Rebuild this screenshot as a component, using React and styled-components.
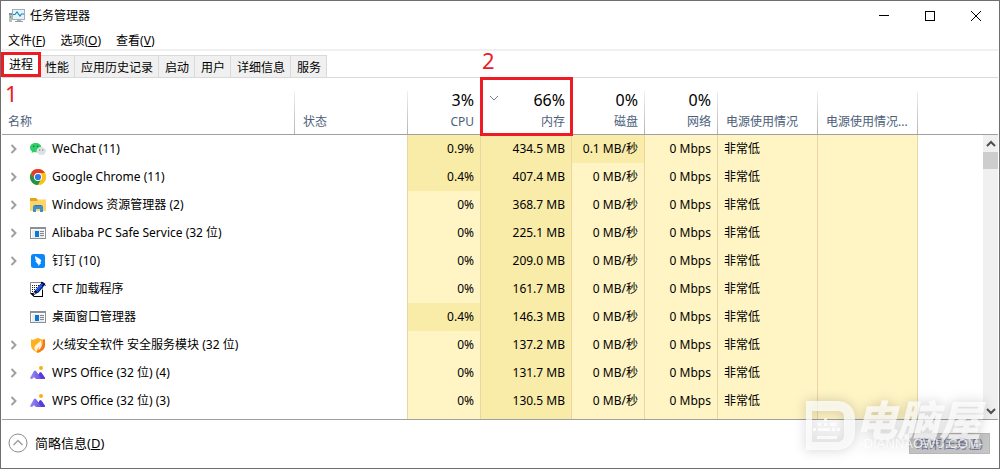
import React, {useState} from "react";

import styled, {createGlobalStyle, css} from 'styled-components';

const GlobalStyle = createGlobalStyle`
  * {
    box-sizing: border-box;
  }

  body {
    margin: 0;
    background: #fff;
    color: #000;
    font-family: "Noto Sans", "Noto Sans CJK SC", sans-serif;
    font-size: 12px;
    line-height: 16px;
  }

  button {
    margin: 0;
    padding: 0;
    border: 0;
    background: none;
    color: inherit;
    font: inherit;
  }

  svg {
    display: block;
  }
`;

const Window = styled.div`
  position: relative;
  display: flex;
  flex-direction: column;
  min-height: 100vh;
  padding: 0 1px;
  border: 1px solid #6f6d70;
  overflow: hidden;
`;

const TitleBar = styled.header`
  display: flex;
  align-items: center;
  height: 30px;
  padding-left: 7px;
`;

const Title = styled.h1`
  flex: 1;
  margin: 0 0 0 5px;
  font-size: 12px;
  font-weight: 400;
`;

const WindowControls = styled.div`
  display: flex;
  margin-right: -1px;
`;

const ControlButton = styled.button`
  display: flex;
  align-items: center;
  justify-content: center;
  width: 46px;
  height: 30px;
`;

const MenuBar = styled.nav`
  display: flex;
  height: 20px;
  border-bottom: 2px solid #f0f0f0;
`;

const MenuItem = styled.button`
  height: 18px;
  padding: 2px 7px 0 6px;

  & + & {
    padding-left: 8px;
  }
`;

const TabStrip = styled.div`
  display: flex;
  align-items: flex-end;
  height: 27px;
  border-bottom: 1px solid #d9d9d9;
`;

const Tab = styled.button`
  position: relative;
  height: 22px;
  padding: 2px 5px 0 6px;
  border: solid #d9d9d9;
  border-width: 1px 1px 0 0;
  background: #f0f0f0;

  ${({$active}) => $active && css`
    height: 26px;
    padding: 2px 6px 0 7px;
    border: 0;
    background: #fff;
  `}
`;

// red marker frame drawn over a tab or a column header
const Marker = styled.span`
  position: absolute;
  inset: ${({$inset}) => $inset};
  border: 3px solid #ed1c24;
  pointer-events: none;
  z-index: 1;
`;

const MarkerNumber = styled.span`
  position: absolute;
  left: ${({$left}) => $left};
  top: ${({$top}) => $top};
  color: #ed1c24;
  font-size: 22px;
  line-height: 24px;
`;

const ListArea = styled.main`
  display: grid;
  flex: 1;
`;

const ProcessTable = styled.table`
  grid-area: 1 / 1;
  width: 100%;
  height: 100%;
  table-layout: fixed;
  border-collapse: separate;
  border-spacing: 0;
`;

const Column = styled.col`
  width: ${({$width}) => $width};
`;

const HeadCell = styled.th`
  position: relative;
  height: 57px;
  padding: 0 7px 4px 8px;
  border-bottom: 1px solid #a0a0a0;
  background: ${({$plain}) => $plain ? 'none' : 'linear-gradient(#f0f0f0, #b4b4b4) right bottom / 1px 43px no-repeat'};
  color: #4c607a;
  font-weight: 400;
  text-align: ${({$align}) => $align || 'left'};
  vertical-align: bottom;
  white-space: nowrap;

  &:first-child {
    padding-left: 6px;
  }
`;

const Usage = styled.div`
  margin-bottom: 4px;
  color: #000;
  font-size: 16px;
  line-height: 20px;
`;

const SortArrow = styled.span`
  position: absolute;
  left: 8px;
  top: 15px;
`;

const Cell = styled.td`
  height: 28px;
  padding: 0 6px;
  border-right: ${({$heat, $edge}) => $heat || $edge ? '1px solid #ebd5a1' : 0};
  background: ${({$heat}) => ({low: '#fff4c4', high: '#f9eca8'}[$heat] || 'none')};
  text-align: ${({$align}) => $align || 'left'};
  white-space: nowrap;
`;

const FillerCell = styled(Cell)`
  height: auto;
  padding: 0;
`;

const ProcessName = styled.div`
  display: flex;
  align-items: center;
`;

const ExpandButton = styled.button`
  width: 22px;
  height: 16px;
  padding: 3px 0;
`;

const IconSlot = styled.span`
  width: 16px;
  height: 16px;
  margin-right: 6px;
`;

const ScrollBar = styled.div`
  grid-area: 1 / 1;
  justify-self: end;
  display: flex;
  flex-direction: column;
  align-items: center;
  width: 15px;
  margin-top: 57px;
  background: #f0f0f0;
`;

const ScrollButton = styled.button`
  display: flex;
  align-items: center;
  justify-content: center;
  width: 15px;
  height: 17px;
`;

const ScrollTrack = styled.div`
  flex: 1;
  width: 15px;
`;

const ScrollThumb = styled.div`
  height: 17px;
  background: #cdcdcd;
`;

const Footer = styled.footer`
  display: flex;
  align-items: center;
  justify-content: space-between;
  height: 49px;
  padding: 0 8px 2px 6px;
  border-top: 1px solid #a0a0a0;
  font-size: 13px;
`;

const DetailsButton = styled.button`
  display: flex;
  align-items: center;
  gap: 7px;
`;

const EndTaskButton = styled.button`
  height: 21px;
  padding: 0 6px;
  border: 1px solid #b9b9b9;
  background: #c6c6c6;
  color: #747b9c;
`;

const Watermark = styled.div`
  position: absolute;
  right: 16px;
  bottom: 16px;
  display: flex;
  align-items: center;
  gap: 4px;
  color: rgba(255, 255, 255, 0.72);
  filter: drop-shadow(0 0 6px rgba(0, 0, 0, 0.25));
  pointer-events: none;
`;

const WatermarkText = styled.div`
  text-align: center;
`;

const WatermarkName = styled.div`
  margin-left: -6px;
  font-family: "Noto Sans CJK SC", sans-serif;
  font-size: 42px;
  font-style: italic;
  font-weight: 900;
  line-height: 36px;
`;

const WatermarkSite = styled.div`
  font-family: "Liberation Sans", sans-serif;
  font-size: 13px;
  line-height: 16px;
`;

const Chevron = ({dir = 'right', color = '#a0a0a0', width = 2}) => {
  const paths = {
    right: 'M3.5 1 L7.5 5 L3.5 9',
    down: 'M1 3 L5 7 L9 3',
    up: 'M1 7 L5 3 L9 7',
  };
  return (
      <svg width="10" height="10" viewBox="0 0 10 10" fill="none">
        <path d={paths[dir]} stroke={color} strokeWidth={width}/>
      </svg>
  )
};

const TaskManagerIcon = () => (
    <svg width="16" height="16" viewBox="0 0 16 16">
      <rect x="0" y="5" width="3" height="9" fill="#b9bcbd"/>
      <rect x="0" y="5" width="3" height="2" fill="#8b8f92"/>
      <rect x="1" y="8" width="1" height="2" fill="#36c148"/>
      <rect x="3" y="1" width="13" height="11" fill="#a9adb0"/>
      <rect x="4" y="2" width="11" height="9" fill="#e3f5fc"/>
      <path d="M4 6.500 L6 6.500 L8 4 L11 8 L12.5 6 L15 6" fill="none" stroke="#1784b5" strokeWidth="1.1"/>
      <rect x="8" y="12" width="4" height="1" fill="#b0b3b5"/>
      <rect x="6" y="13" width="8" height="1" fill="#9a9da0"/>
    </svg>
);

const WeChatIcon = () => (
    <svg width="16" height="16" viewBox="0 0 16 16">
      <path d="M5.7 2 C2.5 2 0 4 0 6.7 C0 8.2 .8 9.5 2 10.3 L1.7 12 L3.6 11 C4.3 11.2 5 11.3 5.7 11.3 C8.9 11.3 11.4 9.3 11.4 6.7 C11.4 4 8.9 2 5.7 2Z" fill="#2ecf68"/>
      <circle cx="3.8" cy="5.3" r=".8" fill="#16703a"/>
      <circle cx="7.7" cy="5.3" r=".8" fill="#16703a"/>
      <path d="M11.2 6 C8.5 6 6.5 7.8 6.5 10 C6.5 12.2 8.5 14 11.2 14 C11.8 14 12.3 13.9 12.9 13.7 L14.5 14.6 L14.2 13.1 C15.3 12.4 16 11.3 16 10 C16 7.8 13.9 6 11.2 6Z" fill="#dfe2e3"/>
      <circle cx="9.7" cy="9" r=".7" fill="#7b7f82"/>
      <circle cx="12.8" cy="9" r=".7" fill="#7b7f82"/>
    </svg>
);

const ChromeIcon = () => (
    <svg width="16" height="16" viewBox="0 0 16 16">
      <circle cx="8" cy="8" r="8" fill="#fbc116"/>
      <path d="M8 4 L14.93 4 A8 8 0 0 0 1.07 4 L4.54 10Z" fill="#e33b2e"/>
      <path d="M1.07 4 A8 8 0 0 0 8 16 L11.46 10 L8 10 L4.54 10 Z" fill="#229342"/>
      <path d="M8 16 A8 8 0 0 0 14.93 4 L8 4 L11.46 10Z" fill="#fbc116"/>
      <circle cx="8" cy="8" r="4" fill="#fff"/>
      <circle cx="8" cy="8" r="3.1" fill="#2f78e8"/>
    </svg>
);

const ExplorerIcon = () => (
    <svg width="16" height="16" viewBox="0 0 16 16">
      <path d="M0 1 H6 L8 3 H8 V6 H0Z" fill="#e0a31a"/>
      <path d="M0 4 H7 L8 2.5 H16 V14 H0Z" fill="#fdd465"/>
      <path d="M3 15 V10 Q3 8 5 8 H11 Q13 8 13 10 V15 H10 V12 H6 V15Z" fill="#3c8ecf"/>
      <path d="M5 8 H11 V9 H5Z" fill="#2674b4"/>
    </svg>
);

const ServiceIcon = () => (
    <svg width="16" height="16" viewBox="0 0 16 16">
      <rect x=".5" y="2.5" width="15" height="11" fill="#fff" stroke="#8b9095"/>
      <rect x="0" y="2" width="16" height="2" fill="#8b9095"/>
      <rect x="2" y="5" width="12" height="8" fill="#ececec"/>
      <rect x="5" y="6" width="4" height="6" fill="#0a77d5"/>
      <path d="M10 6.5 H14 M10 8.5 H14 M10 10.5 H14" stroke="#858b90"/>
    </svg>
);

const DingTalkIcon = () => (
    <svg width="16" height="16" viewBox="0 0 16 16">
      <rect x="1" y="1" width="14" height="14" rx="2.5" fill="#0c86fb"/>
      <path d="M5 3 C7 4.6 10 5.5 11 7 C11.5 8 10.8 9 10.2 10 H11.3 L8 13 L8.3 11 H7.2 L7.5 9.9 C5.9 9.8 5.6 8.7 5.4 7.8 L6.5 7.9 C5.4 6.8 5 5 5 3Z" fill="#fff"/>
    </svg>
);

const CtfIcon = () => (
    <svg width="16" height="16" viewBox="0 0 16 16">
      <path d="M.5 1.5 H12.5 V15.5 H3.5 L.5 12.5Z" fill="#fff" stroke="#8a8a8a"/>
      <path d="M0 12 L4 16 H13 V9 L12 9 V15 H4 V12Z" fill="#000"/>
      <path d="M2 4.5 H10 M2 6.5 H9 M2 8.5 H7 M2 10.5 H6" stroke="#222" strokeDasharray="1 1"/>
      <path d="M3 14 L5 9.5 L12.5 .8 L15.5 3 L8.5 11.5Z" fill="#000080"/>
      <path d="M6 10 L13 2.2" stroke="#1f6bff" strokeWidth="1.2"/>
      <path d="M7 11 L12 5" stroke="#00c5df" strokeWidth=".7"/>
      <path d="M11 1 L15.5 4.5" stroke="#000"/>
      <path d="M3 14 L4.5 10.7 L6 12.5Z" fill="#fff" stroke="#000" strokeWidth=".6"/>
    </svg>
);

const HuorongIcon = () => (
    <svg width="16" height="16" viewBox="0 0 16 16">
      <path d="M1 2.5 C4 3 6 2 8 .8 C10 2 12 3 15 2.5 V8 C15 12 11.5 14.5 8 15.7 C4.5 14.5 1 12 1 8Z" fill="#ffb01f"/>
      <path d="M13 2.6 L15 2.5 V8 C15 12 11.5 14.5 8 15.7 L6.5 15 C11 11.5 13.5 8 13 2.6Z" fill="#f7791b"/>
      <path d="M10.5 3 C10 6 5 7 4.5 10.5 C4.3 12.5 5.5 14 6.8 14.5 C6.5 12.5 8 11.5 8.5 10 C9 11 8.8 12 8.7 13 C11.5 11 12.8 7.5 10.5 3Z" fill="#fff3df"/>
    </svg>
);

const WpsIcon = () => (
    <svg width="16" height="16" viewBox="0 0 16 16">
      <defs>
        <linearGradient id="wpsHill" x1="0" x2="1">
          <stop offset="0" stopColor="#9b8cf8"/>
          <stop offset="1" stopColor="#5539d8"/>
        </linearGradient>
      </defs>
      <path d="M0 13 L4 6 Q5 4.8 6 6 L8.5 9.5 L9.5 7.8 Q10.5 6.6 11.5 7.8 L15 13 Q15 14 14 14 H6 L4 12.3 L2 14 Q0 14 0 13Z" fill="url(#wpsHill)"/>
      <path d="M8.5 9.5 L9.5 7.8 Q10.5 6.6 11.5 7.8 L15 13 Q15 14 14 14 H11.5Z" fill="#5a3cdc"/>
      <circle cx="11" cy="3" r="2" fill="#fbae17"/>
    </svg>
);

const columns = [
  {label: '名称', width: '293px'},
  {label: '状态', width: '113px'},
  {label: 'CPU', width: '73px', usage: '3%', align: 'right'},
  {label: '内存', width: '91px', usage: '66%', align: 'right', sorted: true},
  {label: '磁盘', width: '73px', usage: '0%', align: 'right'},
  {label: '网络', width: '73px', usage: '0%', align: 'right'},
  {label: '电源使用情况', width: '100px'},
  {label: '电源使用情况...', width: '100px'},
];

const processes = [
  {name: 'WeChat (11)', Icon: WeChatIcon, group: true, cpu: '0.9%', memory: '434.5 MB', disk: '0.1 MB/秒'},
  {name: 'Google Chrome (11)', Icon: ChromeIcon, group: true, cpu: '0.4%', memory: '407.4 MB', disk: '0 MB/秒'},
  {name: 'Windows 资源管理器 (2)', Icon: ExplorerIcon, group: true, cpu: '0%', memory: '368.7 MB', disk: '0 MB/秒'},
  {name: 'Alibaba PC Safe Service (32 位)', Icon: ServiceIcon, group: true, cpu: '0%', memory: '225.1 MB', disk: '0 MB/秒'},
  {name: '钉钉 (10)', Icon: DingTalkIcon, group: true, cpu: '0%', memory: '209.0 MB', disk: '0 MB/秒'},
  {name: 'CTF 加载程序', Icon: CtfIcon, cpu: '0%', memory: '161.7 MB', disk: '0 MB/秒'},
  {name: '桌面窗口管理器', Icon: ServiceIcon, cpu: '0.4%', memory: '146.3 MB', disk: '0 MB/秒'},
  {name: '火绒安全软件 安全服务模块 (32 位)', Icon: HuorongIcon, group: true, cpu: '0%', memory: '137.2 MB', disk: '0 MB/秒'},
  {name: 'WPS Office (32 位) (4)', Icon: WpsIcon, group: true, cpu: '0%', memory: '131.7 MB', disk: '0 MB/秒'},
  {name: 'WPS Office (32 位) (3)', Icon: WpsIcon, group: true, cpu: '0%', memory: '130.5 MB', disk: '0 MB/秒'},
];

const menus = [['文件', 'F'], ['选项', 'O'], ['查看', 'V']];
const tabs = ['进程', '性能', '应用历史记录', '启动', '用户', '详细信息', '服务'];

const heat = value => parseFloat(value) > 0 ? 'high' : 'low';

const ProcessRow = ({name, Icon, group, cpu, memory, disk}) => (
    <tr>
      <Cell>
        <ProcessName>
          {group ?
              <ExpandButton aria-label={`展开 ${name}`}><Chevron/></ExpandButton> :
              <ExpandButton as="span"/>
          }
          <IconSlot><Icon/></IconSlot>
          {name}
        </ProcessName>
      </Cell>
      <Cell $edge/>
      <Cell $heat={heat(cpu)} $align="right">{cpu}</Cell>
      <Cell $heat="high" $align="right">{memory}</Cell>
      <Cell $heat={heat(disk)} $align="right">{disk}</Cell>
      <Cell $heat="low" $align="right">0 Mbps</Cell>
      <Cell $heat="low">非常低</Cell>
      <Cell $heat="low"/>
      <Cell/>
    </tr>
);

const App = () => {
  const [active, setActive] = useState('进程');

  return (
      <Window>
        <GlobalStyle/>
        <TitleBar>
          <TaskManagerIcon/>
          <Title>任务管理器</Title>
          <WindowControls>
            <ControlButton aria-label="最小化">
              <svg width="10" height="10" viewBox="0 0 10 10"><path d="M0 4.5 H10" stroke="#000"/></svg>
            </ControlButton>
            <ControlButton aria-label="最大化">
              <svg width="10" height="10" viewBox="0 0 10 10"><rect x=".5" y=".5" width="9" height="9" fill="none" stroke="#000"/></svg>
            </ControlButton>
            <ControlButton aria-label="关闭">
              <svg width="10" height="10" viewBox="0 0 10 10"><path d="M0 0 L10 10 M10 0 L0 10" stroke="#000"/></svg>
            </ControlButton>
          </WindowControls>
        </TitleBar>

        <MenuBar>
          {menus.map(([label, key]) => (
              <MenuItem key={key}>{label}(<u>{key}</u>)</MenuItem>
          ))}
        </MenuBar>

        <TabStrip role="tablist">
          {tabs.map(tab => (
              <Tab key={tab} role="tab" aria-selected={tab === active} $active={tab === active}
                   onClick={() => setActive(tab)}>
                {tab}
                {tab === '进程' && <Marker $inset="1px -2px 0 -1px"/>}
              </Tab>
          ))}
        </TabStrip>

        <ListArea>
          <ProcessTable>
            <colgroup>
              {columns.map(({label, width}) => <Column key={label} $width={width}/>)}
              <Column $width="auto"/>
            </colgroup>
            <thead>
              <tr>
                {columns.map(({label, usage, align, sorted}, i) => (
                    <HeadCell key={label} scope="col" $align={align}>
                      {sorted && <SortArrow><Chevron dir="down" color="#6d7f92" width={1}/></SortArrow>}
                      {usage && <Usage>{usage}</Usage>}
                      {label}
                      {i === 0 && <MarkerNumber $left="3px" $top="3px">1</MarkerNumber>}
                      {sorted && <MarkerNumber $left="1px" $top="-30px">2</MarkerNumber>}
                      {sorted && <Marker $inset="-1px -1px -2px"/>}
                    </HeadCell>
                ))}
                <HeadCell as="td" $plain/>
              </tr>
            </thead>
            <tbody>
              {processes.map(process => <ProcessRow key={process.name} {...process}/>)}
              <tr>
                <FillerCell/>
                <FillerCell $edge/>
                <FillerCell $heat="low"/>
                <FillerCell $heat="high"/>
                <FillerCell $heat="low"/>
                <FillerCell $heat="low"/>
                <FillerCell $heat="low"/>
                <FillerCell $heat="low"/>
                <FillerCell/>
              </tr>
            </tbody>
          </ProcessTable>
          <ScrollBar>
            <ScrollButton aria-label="向上滚动"><Chevron dir="up" color="#505050"/></ScrollButton>
            <ScrollTrack><ScrollThumb/></ScrollTrack>
            <ScrollButton aria-label="向下滚动"><Chevron dir="down" color="#505050"/></ScrollButton>
          </ScrollBar>
        </ListArea>

        <Footer>
          <DetailsButton>
            <svg width="20" height="20" viewBox="0 0 20 20" fill="none">
              <circle cx="10" cy="10" r="9" stroke="#8c8c8c"/>
              <path d="M5.5 12 L10 7.5 L14.5 12" stroke="#a0a0a0" strokeWidth="1.5"/>
            </svg>
            <span>简略信息(<u>D</u>)</span>
          </DetailsButton>
          <EndTaskButton disabled>结束任务(<u>E</u>)</EndTaskButton>
        </Footer>

        <Watermark>
          <svg width="50" height="50" viewBox="0 0 50 50" fill="currentColor">
            <path fillRule="evenodd" d="M0 0 H31 Q49 1 49 19 V30 Q49 48 31 49 H0Z M6 10 V41 H32 Q38 40 38 34 V16 Q38 10 32 10Z"/>
            <path d="M18 17 H21 V20 H18Z M12 22 H15 V25 H12Z M18 22 H21 V25 H18Z M24 22 H27 V25 H24Z M27 22 H30 V25 H27Z M7 27 H10 V30 H7Z M12 27 H24 V30 H12Z M26 27 H29 V30 H26Z M31 27 H34 V30 H31Z M11 35 H31 V38 H11Z"/>
          </svg>
          <WatermarkText>
            <WatermarkName>电脑屋</WatermarkName>
            <WatermarkSite>-DIANNAOWU.COM-</WatermarkSite>
          </WatermarkText>
        </Watermark>
      </Window>
  )
};

export default App;
